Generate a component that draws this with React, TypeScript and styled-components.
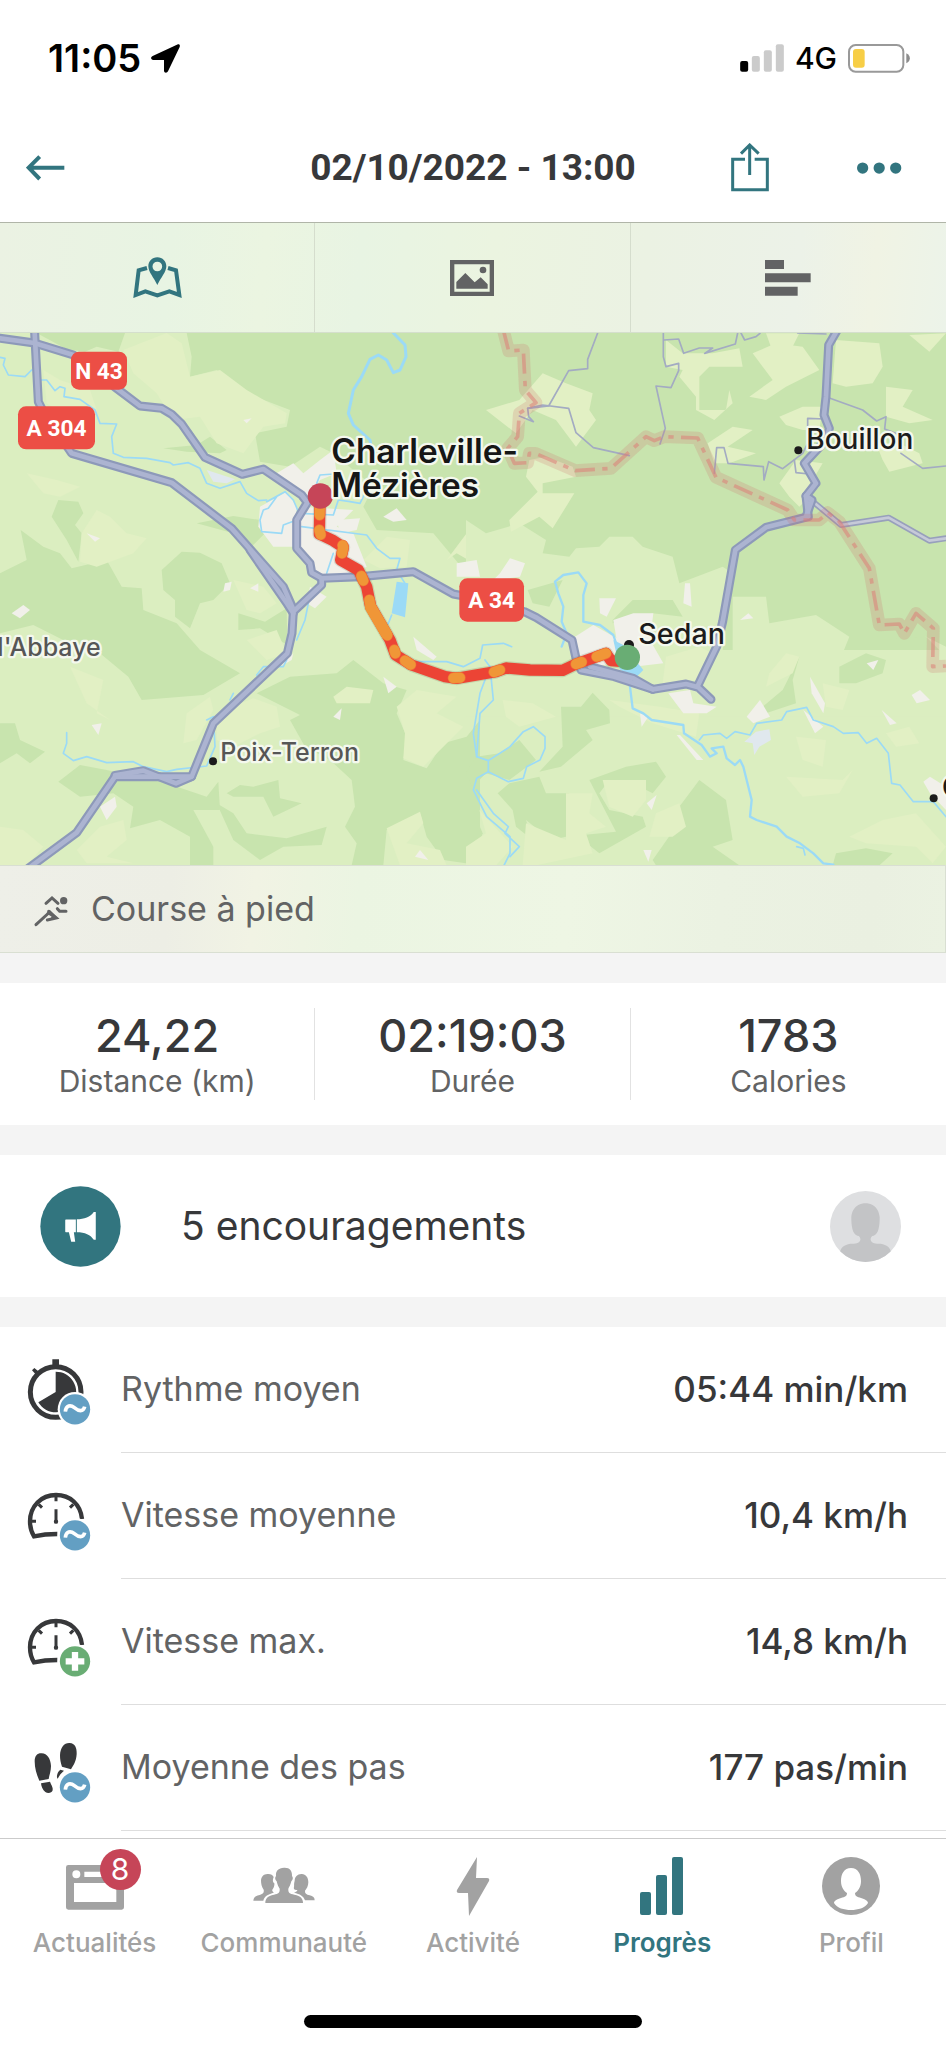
import React from "react";
import styled, { createGlobalStyle } from "styled-components";

const teal = "#32757f";
const ink = "#37383a";
const slate = "#626364";
const mute = "#a2a2a2";
const sans = `Inter, "Liberation Sans", sans-serif`;

const GlobalStyle = createGlobalStyle`
  * { box-sizing: border-box; }
  body { margin: 0; background: #fff; font-family: ${sans}; color: ${ink}; }
  button { font: inherit; color: inherit; border: 0; padding: 0; margin: 0; background: none; cursor: pointer; }
  a { color: inherit; text-decoration: none; }
  svg { display: block; flex: none; }
`;

const Page = styled.div`
  display: flex;
  flex-direction: column;
  min-height: 100vh;
`;

const StatusBar = styled.div`
  display: flex;
  align-items: center;
  justify-content: space-between;
  height: 116px;
  padding: 0 36px 0 48px;
  color: #000;
`;

const StatusGroup = styled.div<{ $gap: number }>`
  display: flex;
  align-items: center;
  gap: ${(p) => p.$gap}px;
`;

const Clock = styled.span`
  font-size: 38px;
  line-height: 44px;
  font-weight: 600;
`;

const Network = styled.span`
  font-size: 30px;
  line-height: 36px;
  font-weight: 500;
`;

const Header = styled.header`
  display: grid;
  grid-template-columns: 1fr auto 1fr;
  align-items: center;
  height: 107px;
  padding: 0 44px 2px 26px;
  border-bottom: 1px solid #b0b5a8;
`;

const Title = styled.h1`
  margin: 0;
  font-family: Roboto, ${sans};
  font-size: 37px;
  line-height: 44px;
  font-weight: 700;
  padding-left: 18px;
`;

const HeaderActions = styled.div`
  display: flex;
  align-items: center;
  justify-content: flex-end;
  gap: 88px;
`;

const Tabs = styled.div`
  display: grid;
  grid-template-columns: repeat(3, 1fr);
  height: 110px;
  border-bottom: 1px solid #d5dfcd;
  background: linear-gradient(95deg, #ebf2e3 0%, #e8f4e3 18%, #ebf5e1 28%, #e8f4e3 38%, #ebf4e0 52%, #ebf2e3 68%, #ecf2e8 84%, #f0f3e4 92%, #ecf3e9 100%);
`;

const Tab = styled.button<{ $active?: boolean }>`
  display: flex;
  align-items: center;
  justify-content: center;
  color: ${(p) => (p.$active ? teal : slate)};
  &:not(:last-child) { border-right: 1px solid #d5ddcd; }
`;

const MapDrawing = styled.svg`
  width: 100%;
  height: auto;
`;

const SportRow = styled.div`
  display: flex;
  align-items: center;
  gap: 23px;
  height: 88px;
  padding-left: 34px;
  border: 1px solid #d9dfd2;
  border-left: 0;
  background: linear-gradient(95deg, #eeefe8 0%, #edeee5 18%, #f1f3e4 27%, #ebf5e2 38%, #eef6e4 60%, #ebf2e2 76%, #eaf0e1 92%, #ebf2e2 100%);
  font-size: 34px;
  line-height: 42px;
  color: ${slate};
`;

const Sections = styled.main`
  display: flex;
  flex-direction: column;
  gap: 30px;
  padding-top: 30px;
  flex: 1;
  background: #f4f4f4;
`;

const Totals = styled.dl`
  display: grid;
  grid-template-columns: repeat(3, 1fr);
  margin: 0;
  padding: 25px 0;
  height: 142px;
  background: #fff;
`;

const Total = styled.div`
  display: flex;
  flex-direction: column-reverse;
  justify-content: center;
  align-items: center;
  &:not(:last-child) { border-right: 1px solid #e2e2e2; }
`;

const TotalLabel = styled.dt`
  font-size: 30px;
  line-height: 36px;
  color: ${slate};
`;

const TotalValue = styled.dd`
  margin: 0;
  font-size: 45px;
  line-height: 54px;
  font-weight: 500;
`;

const Cheers = styled.button`
  display: flex;
  align-items: center;
  height: 142px;
  padding: 0 45px 0 40px;
  background: #fff;
  text-align: left;
`;

const CheersText = styled.span`
  flex: 1;
  padding-left: 60px;
  font-size: 39px;
  line-height: 48px;
`;

const Metrics = styled.dl`
  margin: 0;
  flex: 1;
  background: #fff;
`;

const Metric = styled.div`
  display: flex;
  padding-left: 26px;
  height: 126px;
`;

const MetricBody = styled.div`
  display: flex;
  flex: 1;
  align-items: center;
  justify-content: space-between;
  margin-left: 29px;
  padding: 0 38px 2px 0;
  border-bottom: 1px solid #dedede;
`;

const MetricIcon = styled.svg`
  width: 66px;
  height: 70px;
  margin-top: 30px;
`;

const MetricLabel = styled.dt`
  font-size: 34px;
  line-height: 42px;
  color: ${slate};
`;

const MetricValue = styled.dd`
  margin: 0;
  font-size: 35px;
  line-height: 42px;
  font-weight: 500;
`;

const TabBar = styled.nav`
  display: flex;
  flex-direction: column;
  height: 210px;
  border-top: 1px solid #cbcbcb;
  background: #fff;
`;

const TabBarItems = styled.div`
  display: grid;
  grid-template-columns: repeat(5, 1fr);
  flex: 1;
  padding-top: 17px;
`;

const TabBarItem = styled.a<{ $active?: boolean }>`
  display: flex;
  flex-direction: column;
  align-items: center;
  gap: 11px;
  font-size: 26px;
  line-height: 32px;
  font-weight: ${(p) => (p.$active ? 600 : 500)};
  color: ${(p) => (p.$active ? teal : mute)};
`;

const IconSlot = styled.span`
  position: relative;
  display: block;
`;

const Badge = styled.span`
  position: absolute;
  top: -7px;
  right: -16px;
  width: 41px;
  height: 41px;
  border-radius: 50%;
  background: #c64558;
  color: #fff;
  font-size: 30px;
  line-height: 41px;
  font-weight: 400;
  text-align: center;
`;

const HomeIndicator = styled.div`
  align-self: center;
  width: 338px;
  height: 13px;
  margin-bottom: 20px;
  border-radius: 7px;
  background: #000;
`;

/* ---------- map ---------- */

const FOREST = "#c8e4ae";
const MEADOW = "#e2f0c4";
const TOWN = "#f1f0ea";
const WATER = "#9bdaf6";

const shapes = (list: string[], fill: string) =>
  list.map((points, i) => <polygon key={i} points={points} fill={fill} />);

const nwForest = [
  "560,39 1440,39 1440,980 1400,760 1300,640 1130,630 1090,560 1120,500 1000,400 960,380 870,440 780,425 765,340 860,320 870,270 740,220 650,150 570,170 575,110",
  "110,39 375,39 355,95 290,80 255,95 200,88",
  "0,760 80,720 62,630 130,680 180,700 215,745 320,720 365,800 425,805 430,870 530,910 600,990 720,1060 610,1125 425,1140 385,1070 300,1000 200,965 100,915 0,940",
  "485,750 545,695 600,698 665,730 690,790 640,840 600,850 570,925 525,890 525,840 490,810",
  "155,590 175,540 235,545 250,580 225,615 245,640 235,725 200,660",
  "590,610 700,588 800,603 795,640 745,690 700,640",
  "715,880 795,905 860,865 862,975 780,925 715,930",
  "490,385 590,375 630,350 680,390 660,400 560,395",
];
const nwField = [
  "1060,790 1160,760 1340,790 1290,820 1225,870 1240,905 1300,912 1440,860 1440,1040 1180,1020 1090,860",
];
const nwMeadow = [
  "370,90 500,39 545,70 570,170 660,150 740,210 860,280 855,310 790,320 730,400 650,370 600,290 520,300 470,220 400,160",
  "130,150 180,180 270,210 290,270 270,330 210,300 140,250",
  "80,460 170,480 240,500 180,530 130,520",
  "245,640 290,570 330,590 380,640 440,655 400,700 290,740 240,725",
  "700,780 790,800 830,850 780,880 740,870",
  "1090,720 1160,650 1230,660 1220,740 1140,745",
  "1340,720 1400,640 1440,600 1440,740 1370,700",
  "740,960 830,930 860,1000 800,1020",
  "210,1040 310,1080 290,1180 330,1200 260,1150",
];
const neMeadow = [
  "60,270 160,240 230,160 300,190 380,220 370,270 390,300 330,380 270,300 200,270 150,340",
  "190,420 240,410 320,440 330,470 230,490 230,520 325,520 260,625 220,590 135,635 130,600 215,515 180,470",
  "600,60 650,100 740,100 820,85 830,140 730,140 700,170 700,270 780,270 790,210 800,250 745,300 690,270 690,230 640,170 650,150 600,140",
  "860,100 930,70 1010,80 1060,150 960,200 900,240 850,230 920,180",
  "1110,60 1240,70 1250,140 1220,190 1140,200 1100,190",
  "1260,200 1340,210 1310,260 1400,300 1330,310 1260,290",
  "940,290 1010,260 1070,260 1060,330 1010,330 960,315",
  "725,370 800,320 860,330 785,380 870,400 790,430 745,430",
  "940,490 990,420 1070,430 1040,480 1060,500 1000,560 970,530",
  "1230,370 1300,370 1360,400 1370,430 1270,455 1250,420",
  "900,40 1000,40 970,100 920,95",
  "1330,45 1440,40 1390,95",
];
const neField = [
  "0,600 60,640 160,610 240,660 230,700 310,710 330,685 400,680 430,650 500,650 530,680 620,710 640,790 770,740 800,760 770,990 0,990",
  "800,830 900,830 910,910 1050,885 1150,950 1130,1000 1210,1070 1440,1030 1440,990 800,990",
  "1290,910 1380,860 1440,880 1440,1010 1380,950",
];
const swForest = [
  "770,340 870,290 1010,280 1060,240 1150,310 1220,330 1190,400 1220,470 1210,540 1280,565 1330,490 1400,470 1440,420 1440,856 1330,840 1280,770 1260,700 1160,750 1150,856 1055,856 1070,790 1035,740 1065,680 1055,600 990,540 915,500 870,420 900,405",
  "175,605 240,555 320,570 500,610 620,650 655,605 660,690 580,690 640,800 640,856 570,856 570,770 480,720 390,745 400,680 340,640 240,650",
  "650,670 700,700 740,760 860,775 980,740 965,795 850,800 780,840 700,780",
  "0,430 45,430 60,480 135,515 90,550 50,520 0,550",
  "680,640 720,615 760,620 835,600 840,655 905,670 820,710 790,650 700,650",
];
const swMeadow = [
  "650,400 760,355 830,380 840,440 780,460 700,500 650,480",
  "1190,380 1250,330 1370,350 1310,400 1390,440 1330,500 1270,560 1210,535 1215,460",
  "1160,745 1260,695 1270,730 1220,790 1320,810 1340,856 1200,856",
  "230,810 300,740 370,720 380,780 320,830 400,850 260,850",
  "0,740 70,750 130,800 80,856 0,856",
  "1000,350 1040,320 1120,330 1110,370 1010,370",
  "560,400 630,350 640,390 590,480 550,490",
];
const seForest = [
  "285,380 345,380 380,338 430,390 432,430 360,450 380,480 285,560 220,575 290,500",
  "95,640 130,610 220,590 240,640 310,640 300,770 255,780 180,720 200,780 150,740 140,690",
  "0,580 30,530 100,520 160,480 210,540 130,600 60,580 20,620",
  "370,600 480,560 570,545 600,590 560,640 500,610 430,600 400,640 430,690 530,710 540,740 400,820 350,780 350,765 450,755",
  "560,840 630,740 640,680 700,600 780,660 800,780 740,800 820,856 570,856",
  "0,640 50,760 30,820 0,790",
  "890,380 950,330 1000,230 980,300 990,370 900,400",
  "1120,260 1200,220 1260,240 1250,280 1170,310 1120,310",
  "1110,820 1200,805 1280,820 1240,856 1100,856",
  "440,120 500,60 620,60 650,110 560,100 440,130",
  "185,30 290,0 250,80 200,70",
];
const seMeadow = [
  "110,360 200,370 270,410 160,440 120,410",
  "430,360 580,380 700,400 690,470 560,430 460,380",
  "600,230 700,200 740,220 690,300 590,310",
  "300,640 380,640 370,700 420,740 360,760 380,820 210,856 170,856 180,730 300,780",
  "410,600 540,600 540,660 500,710 430,680",
  "550,770 570,700 640,670 660,740 620,770",
  "960,590 1130,600 1160,570 1120,640 1010,650",
  "990,470 1080,480 1070,560 1010,540",
  "1070,310 1150,330 1130,390 1080,380",
  "1150,770 1250,720 1350,700 1440,800 1400,850 1350,800 1200,790",
  "910,280 960,220 1000,230 980,280 900,320",
  "0,800 60,760 40,690 140,800 90,856 0,856",
  "1260,460 1330,440 1360,490 1290,500",
];

const towns = [
  "780,560 860,515 890,560 885,680 820,680 775,620",
  "830,460 880,430 910,460 960,420 1000,390 1010,460 960,480 930,530 870,500",
  "900,560 1060,570 1010,620 1060,640 1100,740 1040,770 960,790 930,740 895,690",
  "1010,600 1080,595 1070,630 1020,640",
  "1150,590 1190,565 1220,600 1180,605",
  "1370,730 1430,720 1440,770 1370,770",
  "930,800 980,830 945,865 920,850",
  "35,880 70,855 90,870 60,895",
  "675,790 695,785 690,810 670,815",
  "750,805 775,790 775,815",
  "260,640 300,655 285,665",
  "730,300 755,295 740,310",
  "1240,950 1310,1010 1300,1020 1250,990",
  "1150,1070 1190,1100 1165,1120",
  "1000,1190 1025,1165 1020,1200",
  "275,1215 305,1210 295,1245",
  "300,1460 345,1430 350,1460 320,1500",
  "1245,1610 1260,1590 1285,1620",
  "840,1040 880,1000 875,1020",
  "1710,960 1780,915 1860,960 1850,1030 1740,1045",
  "1840,900 1900,880 1960,880 1950,960 1990,1030 1900,1040 1850,960",
  "1798,835 1848,835 1820,890 1800,880",
  "2055,790 2070,790 2075,860 2050,850",
  "2005,1120 2070,1110 2080,1150 2150,1160 2120,1180 2050,1180",
  "2240,1190 2280,1140 2310,1190 2260,1210",
  "2430,1070 2475,1150 2470,1180 2435,1120",
  "2410,1170 2470,1220 2445,1240",
  "2030,1245 2040,1245 2110,1320 2090,1320",
  "1920,1180 1945,1190 1925,1220",
  "2600,1030 2635,1020 2620,1050",
  "2735,1125 2760,1110 2790,1140 2750,1150",
  "2770,1385 2790,1370 2838,1400 2838,1470 2790,1420",
  "1500,760 1530,715 1575,730 1560,770 1480,780",
  "1930,1590 1955,1590 1945,1625",
  "1940,1450 1970,1425 1955,1470",
  "2645,1170 2690,1210 2670,1215",
  "2220,900 2245,880 2260,895",
];

const rivers = [
  "0,112 15,115 10,135 25,165 75,170 95,150",
  "125,180 140,180 165,212 180,200 195,205 192,230 240,238 285,270 300,310 350,312 335,350 340,400 370,412 440,415 510,428 520,435 565,428 600,445 620,490 660,505 720,485 740,520 775,542 800,540",
  "800,545 855,515 880,540 893,570 890,600 850,615 845,640 785,635 780,600 790,570 805,565 830,530",
  "905,620 1100,645 1130,685 1170,715 1200,715 1190,750 1215,790",
  "950,490 960,465 1000,462",
  "900,580 1000,585 1015,540 1050,545 1080,550 1100,510",
  "1175,885 1165,910 1150,930",
  "925,850 915,900 890,960",
  "1000,700 980,760",
  "860,1020 850,1040 790,1040 770,1065 M700,1120 690,1140",
  "200,1238 200,1270 190,1300 220,1322 260,1310 320,1328 400,1325 430,1340 500,1355 530,1348 620,1338 645,1280 640,1190 620,1200",
  "1250,1025 1340,1025 1390,1040 1440,1015 1448,975 1510,970 1535,980",
  "1455,1020 1470,1040 1440,1120 1420,1240 1430,1310 1465,1322 1465,1355 1430,1375 1420,1410 1460,1490 1530,1550 1530,1600 1510,1640",
  "1465,1322 1530,1280 1570,1235 1600,1220 1635,1250 1635,1285 1620,1320 1580,1340 1570,1375 1525,1385 1465,1355",
  "1470,1040 1480,1140 1440,1180 1430,1310",
  "1430,1410 1480,1480 1525,1520 1515,1540 1558,1580 1530,1610",
  "2098,1260 2110,1245 2160,1240 2180,1255 2205,1235 2250,1245 2270,1210 2345,1200 2360,1175 2420,1162 2440,1200 2500,1220 2530,1240 2575,1238 2600,1270 2630,1255 2665,1300 2675,1390 2700,1395 2740,1445 2800,1445 2838,1490",
  "2390,1580 2410,1585 2415,1605",
];
const wideRivers = [
  "1685,980 1700,940 1685,905 1690,860 1675,820 1665,785 1690,765 1735,757 1760,790 1750,825 1750,905 1800,915 1840,945 1850,975",
  "1885,1060 1898,1165 1930,1180 1955,1200 2050,1215 2052,1240 2105,1275 2130,1310 2150,1300 2135,1285 2170,1280 2180,1315 2205,1335 2220,1320 2230,1340 2240,1380 2255,1440 2250,1490 2270,1500 2330,1520 2360,1550 2400,1570 2440,1600 2470,1630 2500,1634",
];
const meuse = [
  "1180,39 1215,75 1218,110 1200,150 1180,158 1160,120 1135,105 1110,118 1085,170 1060,210 1045,280 1060,315 1110,360 1120,420",
];

const thinRoads = [
  "395,39 365,118 365,146 308,152 248,258 185,265 188,290 202,305 160,288",
  "185,265 230,255 308,265 330,338 382,383 490,407",
  "592,39 592,110 600,140 638,130 638,152 615,203 570,198 598,325 582,372",
  "594,60 638,57 653,100 700,84 740,84 716,100 808,72 815,39",
  "825,39 836,60 870,50 882,40 M995,39 1080,42",
  "1088,233 1190,270 1232,303 1260,290 1256,327 1295,342 M1305,400 1370,445 1440,438",
  "745,460 752,383 774,383 786,430 892,440 894,480 908,425 950,446 1010,400 1025,370 1025,295 1075,297",
  "985,420 990,458 1030,462",
];

const mainRoads = [
  "0,55 103,69 220,105 350,205 420,258 485,265 515,283 545,312 615,412 727,463 790,447 905,525 922,548 890,600 890,685 930,730 935,758 965,775 1080,770 1240,755 1360,822 1480,845 1573,875 1608,892 1716,960 1728,1015 1743,1050 1843,1070 1958,1108 2058,1092 2095,1102 2133,1138",
  "103,20 115,245 130,275 215,400 515,488 695,625 850,800 880,868",
  "750,690 862,852 880,880",
  "965,775 965,795 880,875 876,940 862,1000 640,1210 575,1370 345,1370 230,1538 70,1656",
  "345,1366 430,1352 528,1390 575,1370",
  "2515,25 2486,75 2478,230 2472,285 2488,325 2480,358 2413,430 2448,490 2418,528 2425,590 2298,622 2206,690 2168,905 2150,980 2092,1100",
  "1770,1040 1900,1075 1958,1108",
  "2418,528 2436,540 2418,590",
];

const border =
  "112,30 128,93 172,90 178,210 210,248 160,280 155,350 125,385 145,430 185,428 190,400 208,400 328,452 435,445 540,350 565,362 595,350 695,354 750,472 965,570 985,600 1060,600 1085,578 1120,605 1210,745 1240,915 1300,912 1315,940 1350,880 1402,925 1400,1040 1440,1038";

const track =
  "960,530 958,642 1000,662 1030,682 1022,720 1075,750 1100,800 1112,860 1170,960 1187,1005 1235,1035 1335,1070 1370,1075 1440,1063 1488,1055 1518,1044 1590,1050 1688,1051 1728,1032 1818,1000 1833,1022 1870,1025";
const slowParts = [
  "960,540 959,585",
  "958,630 962,644",
  "1028,676 1030,682 1026,700",
  "1084,768 1090,782",
  "1108,840 1112,860 1162,946",
  "1183,990 1186,1000",
  "1215,1022 1232,1034",
  "1360,1074 1380,1073",
  "1482,1056 1500,1050",
  "1728,1032 1745,1026",
  "1790,1010 1818,1000",
];

const lines = (list: string[], stroke: string, width: number) =>
  list.map((pts, i) => (
    <path key={i} d={"M" + pts} stroke={stroke} strokeWidth={width} fill="none" strokeLinejoin="round" strokeLinecap="round" />
  ));

const PlaceName = styled.text<{ $size: number; $weight: number; $color: string }>`
  font-family: ${sans};
  font-size: ${(p) => p.$size}px;
  font-weight: ${(p) => p.$weight};
  fill: ${(p) => p.$color};
  stroke: #f4f8ee;
  stroke-width: 14px;
  stroke-linejoin: round;
  paint-order: stroke;
`;

const ShieldText = styled.text`
  font-family: Roboto, sans-serif;
  font-size: 68px;
  font-weight: 700;
  fill: #fff;
  text-anchor: middle;
`;

const Shield = ({ x, y, w, h, name }: { x: number; y: number; w: number; h: number; name: string }) => (
  <g>
    <rect x={x} y={y} width={w} height={h} rx="24" fill="#ec4e45" />
    <ShieldText x={x + w / 2} y={y + h / 2 + 24}>{name}</ShieldText>
  </g>
);

const RouteMap = () => (
  <MapDrawing viewBox="0 39 2838 1597" role="img" aria-label="Parcours de Sedan à Charleville-Mézières">
    <rect x="0" y="39" width="2838" height="1597" fill="#dbeec0" />
    {shapes(nwForest, FOREST)}
    {shapes(nwField, "#dbeec0")}
    {shapes(nwMeadow, MEADOW)}
    <g transform="translate(1398 0)">
      <rect x="0" y="39" width="1440" height="1030" fill={FOREST} />
      <rect x="0" y="990" width="1440" height="200" fill="#dbeec0" />
      {shapes(neField, "#dbeec0")}
      {shapes(neMeadow, MEADOW)}
    </g>
    <g transform="translate(0 780)">
      {shapes(swForest, FOREST)}
      {shapes(swMeadow, MEADOW)}
    </g>
    <g transform="translate(1398 780)">
      {shapes(seForest, FOREST)}
      {shapes(seMeadow, MEADOW)}
      <polygon points="1200,0 1440,0 1440,200 1380,170 1250,180 1200,150" fill={FOREST} />
      <polygon points="835,485 870,455 910,448 915,480 880,500 865,525 860,490" fill="#e0e8ee" />
    </g>
    {shapes(towns, TOWN)}
    <polygon points="620,450 705,478 680,490 640,485" fill="#e0e8ee" />
    <polygon points="1190,785 1225,790 1215,892 1175,880" fill={WATER} />
    <polygon points="1840,960 1870,975 1930,1050 1910,1070 1860,1050" fill={WATER} />
    {lines(rivers, WATER, 5)}
    {lines(wideRivers, WATER, 7)}
    {lines(meuse, WATER, 9)}
    <g transform="translate(1398 0)">
      {lines(thinRoads, "#a3abc2", 5)}
      {lines(["1035,540 1125,615 1268,593 1390,662 1440,655"], "#98a0bc", 18)}
      {lines(["1035,540 1125,615 1268,593 1390,662 1440,655"], "#c6cad8", 8)}
    </g>
    {lines(mainRoads, "#8d99b9", 27)}
    {lines(mainRoads, "#acb4d1", 14)}
    <g transform="translate(1398 0)" fill="none" strokeLinejoin="round">
      <path d={"M" + border} stroke="#cf6a6a" strokeOpacity="0.2" strokeWidth="38" />
      <path d={"M" + border} stroke="#dc7f78" strokeOpacity="0.55" strokeWidth="11" strokeDasharray="60 22 16 22" />
    </g>
    {lines([track], "#6c6a4a33", 41)}
    {lines([track], "#ec4435", 34)}
    {lines(slowParts, "#f06f36", 34)}
    {lines(slowParts, "#f09637", 30)}
    {lines(["1112,862 1158,940"], "#f09637", 34)}
    <circle cx="1887" cy="975" r="15" fill="#1b1b1b" />
    <circle cx="961" cy="528" r="38" fill="#c64558" />
    <circle cx="1882" cy="1012" r="38" fill="#69ad74" />
    <circle cx="2395" cy="391" r="12" fill="#1b1b1b" />
    <circle cx="639" cy="1324" r="12" fill="#1b1b1b" />
    <circle cx="2801" cy="1435" r="12" fill="#1b1b1b" />
    <PlaceName $size={100} $weight={600} $color="#161616">
      <tspan x="994" y="428">Charleville-</tspan>
      <tspan x="994" y="530">Mézières</tspan>
    </PlaceName>
    <PlaceName x="2419" y="388" $size={84} $weight={500} $color="#1c1c1c">Bouillon</PlaceName>
    <PlaceName x="1915" y="972" $size={86} $weight={500} $color="#1c1c1c">Sedan</PlaceName>
    <PlaceName x="661" y="1323" $size={75} $weight={500} $color="#565656">Poix-Terron</PlaceName>
    <PlaceName x="-8" y="1008" $size={75} $weight={500} $color="#565656">l'Abbaye</PlaceName>
    <PlaceName x="2826" y="1430" $size={84} $weight={600} $color="#1c1c1c">C</PlaceName>
    <Shield x={213} y={95} w={168} h={114} name="N 43" />
    <Shield x={54} y={259} w={231} h={129} name="A 304" />
    <Shield x={1378} y={775} w={194} h={130} name="A 34" />
  </MapDrawing>
);

/* ---------- icons ---------- */

const AverageMark = () => (
  <g>
    <circle cx="225" cy="268" r="52" fill="#fff" />
    <circle cx="225" cy="268" r="45.5" fill="#639fc3" />
    <path d="M196 275 C198 255 212 254 223 263 C236 274 250 277 254 260" fill="none" stroke="#fff" strokeWidth="11" />
  </g>
);

const MaximumMark = () => (
  <g>
    <circle cx="225" cy="268" r="52" fill="#fff" />
    <circle cx="225" cy="268" r="45.5" fill="#69ad74" />
    <path d="M225 240V296M197 268H253" stroke="#fff" strokeWidth="19" />
  </g>
);

const Stopwatch = () => (
  <g>
    <circle cx="167" cy="216" r="76" fill="none" stroke={ink} strokeWidth="15" />
    <path d="M157 118h20v20h-20zM96 151l7-7 14 11-9 9z" fill={ink} />
    <path d="M167 216V155A61 61 0 1 1 115 247Z" fill={ink} />
  </g>
);

const Gauge = () => (
  <g stroke={ink} fill="none">
    <path d="M246 219C242 175 210 147 168 147C124 147 90 180 90 226C90 244 94 258 102 271C125 266 150 264 172 264" strokeWidth="13" />
    <path d="M168 150v16M116 175l10 10M220 175l-10 10M92 226h16M168 190v38" strokeWidth="9" />
    <circle cx="168" cy="227" r="6.500" fill={ink} stroke="none" />
  </g>
);

const Footsteps = () => (
  <g fill={ink}>
    <path d="M104 190C104 172 113 165 125 166C142 167 152 182 153 204C153 219 148 231 146 243L118 248C110 230 104 212 104 190Z" />
    <path d="M123 256L150 251C153 260 160 268 158 277C155 286 143 287 136 282C128 276 124 266 123 256Z" />
    <path d="M180 172C181 148 193 134 209 135C225 136 231 150 230 168C229 190 220 202 213 214L186 206C182 194 180 184 180 172Z" />
    <path d="M181 215L192 218C184 224 178 232 173 242C168 236 172 222 181 215Z" />
  </g>
);

const metrics = [
  { label: "Rythme moyen", value: "05:44 min/km", icon: <><Stopwatch /><AverageMark /></> },
  { label: "Vitesse moyenne", value: "10,4 km/h", icon: <><Gauge /><AverageMark /></> },
  { label: "Vitesse max.", value: "14,8 km/h", icon: <><Gauge /><MaximumMark /></> },
  { label: "Moyenne des pas", value: "177 pas/min", icon: <><Footsteps /><AverageMark /></> },
];

const totals = [
  { label: "Distance (km)", value: "24,22" },
  { label: "Durée", value: "02:19:03" },
  { label: "Calories", value: "1783" },
];

export default function App() {
  return (
    <Page>
      <GlobalStyle />
      <StatusBar>
        <StatusGroup $gap={10}>
          <Clock>11:05</Clock>
          <svg width="29" height="29" viewBox="402 72 87 87">
            <path d="M483 73C487 72 490 75 488 81L453 154C450 160 441 159 441 152V120H409C401 120 400 111 407 108Z" />
          </svg>
        </StatusGroup>
        <StatusGroup $gap={11}>
          <svg width="44" height="28" viewBox="784 72 131 84">
            <rect x="784" y="123" width="24" height="32" rx="6" />
            <rect x="819" y="108" width="24" height="47" rx="6" fill="#cbcbcb" />
            <rect x="855" y="91" width="24" height="64" rx="6" fill="#cbcbcb" />
            <rect x="891" y="73" width="24" height="82" rx="6" fill="#cbcbcb" />
          </svg>
          <Network>4G</Network>
          <svg width="62" height="29" viewBox="1104 71 186 87">
            <rect x="1107" y="74" width="163" height="80" rx="20" fill="none" stroke="#999" strokeWidth="6" />
            <rect x="1119" y="86" width="35" height="56" rx="9" fill="#f7ce46" />
            <path d="M1279 99C1293 105 1293 123 1279 129Z" fill="#8c8c8c" />
          </svg>
        </StatusGroup>
      </StatusBar>

      <Header>
        <button aria-label="Retour">
          <svg width="40" height="26" viewBox="19 404 120 78" fill="none" stroke={teal} strokeWidth="12">
            <path d="M134 442H26M60 409L27 442L60 476" />
          </svg>
        </button>
        <Title>02/10/2022 - 13:00</Title>
        <HeaderActions>
          <button aria-label="Partager">
            <svg width="38" height="50" viewBox="755 363 114 150" fill="none" stroke={teal} strokeWidth="9">
              <path d="M797 412H760V503H864V412H826M811 459V368M785 395L811 369L838 395" />
            </svg>
          </button>
          <button aria-label="Plus d'options">
            <svg width="45" height="12" viewBox="1130 420 136 36" fill={teal}>
              <circle cx="1147" cy="438" r="17" />
              <circle cx="1197" cy="438" r="17" />
              <circle cx="1247" cy="438" r="17" />
            </svg>
          </button>
        </HeaderActions>
      </Header>

      <Tabs>
        <Tab $active aria-label="Carte">
          <svg width="49" height="41" viewBox="340 709 147 123">
            <path d="M382 742L357 749L348 823L377 812L413 824L449 812L479 823L469 749L445 742" fill="none" stroke="currentColor" strokeWidth="12" />
            <path fillRule="evenodd" fill="currentColor" d="M413 710C429 710 440 722 440 737C440 754 424 770 413 793C402 770 386 754 386 737C386 722 397 710 413 710ZM413 723A14 14 0 1 0 413 752A14 14 0 1 0 413 723Z" />
          </svg>
        </Tab>
        <Tab aria-label="Photos">
          <svg width="44" height="36" viewBox="0 0 132 108" fill="currentColor">
            <path fillRule="evenodd" d="M0 0H132V108H0ZM13 13V95H119V13Z" />
            <path d="M19 86V66L46 39L74 67L92 52L113 73V86Z" />
            <circle cx="99" cy="30" r="10" />
          </svg>
        </Tab>
        <Tab aria-label="Graphiques">
          <svg width="46" height="36" viewBox="0 0 138 108" fill="currentColor">
            <path d="M0 0H57V27H0ZM0 40H137V67H0ZM0 80H98V107H0Z" />
          </svg>
        </Tab>
      </Tabs>

      <RouteMap />

      <SportRow>
        <svg width="34" height="30" viewBox="103 946 102 90" overflow="visible" fill="none" stroke={slate} strokeWidth="9" strokeLinecap="round">
          <circle cx="192" cy="966" r="11" fill={slate} stroke="none" />
          <path d="M139 974L157 958L175 974M173 990L180 998H199M109 1038L147 1003M147 998L170 1018L143 1024" />
          <path d="M140 1004L150 993L174 1018L150 1024L156 1014Z" fill={slate} stroke="none" />
        </svg>
        <span>Course à pied</span>
      </SportRow>

      <Sections>
        <Totals>
          {totals.map((t) => (
            <Total key={t.label}>
              <TotalLabel>{t.label}</TotalLabel>
              <TotalValue>{t.value}</TotalValue>
            </Total>
          ))}
        </Totals>

        <Cheers>
          <svg width="81" height="81" viewBox="60 44 244 244">
            <circle cx="182" cy="166" r="121" fill={teal} />
            <path d="M138 145H168V183H162L166 212H154L147 183H138Q136 183 136 181V147Q136 145 138 145Z" fill="#fff" />
            <path d="M171 144C193 144 212 137 222 122H228V206H222C213 191 195 183 171 183Z" fill="#fff" />
          </svg>
          <CheersText>5 encouragements</CheersText>
          <svg width="71" height="71" viewBox="0 0 70 70">
            <clipPath id="avatar"><circle cx="35" cy="35" r="35" /></clipPath>
            <circle cx="35" cy="35" r="35" fill="#dedfe1" />
            <path
              clipPath="url(#avatar)"
              fill="#c3c4c6"
              d="M35 12C39 12 48 14 49 26C49 34 48 43 43 44C41 44 40 46 40 48C41 52 45 52 50 52C56 53 60 56 60 61V72H10V61C10 56 14 53 20 52C25 52 29 52 30 48C30 46 29 44 27 44C22 43 21 34 21 26C22 14 31 12 35 12Z"
            />
          </svg>
        </Cheers>

        <Metrics>
          {metrics.map((m) => (
            <Metric key={m.label}>
              <MetricIcon viewBox="78 111 198 210">{m.icon}</MetricIcon>
              <MetricBody>
                <MetricLabel>{m.label}</MetricLabel>
                <MetricValue>{m.value}</MetricValue>
              </MetricBody>
            </Metric>
          ))}
        </Metrics>
      </Sections>

      <TabBar>
        <TabBarItems>
          <TabBarItem href="#actualites">
            <IconSlot>
              <svg width="60" height="60" viewBox="194 48 180 180" fill="currentColor">
                <path fillRule="evenodd" d="M204 75H364Q371 75 371 82V202Q371 209 364 209H204Q197 209 197 202V82Q197 75 204 75ZM221 129V186H348V129ZM228 91A12 12 0 1 0 228 115A12 12 0 1 0 228 91ZM252 95V111H348V95Z" />
              </svg>
              <Badge>8</Badge>
            </IconSlot>
            Actualités
          </TabBarItem>
          <TabBarItem href="#communaute">
            <svg width="60" height="60" viewBox="759 48 180 180" overflow="visible" fill="currentColor">
              <path d="M849 83C866 82 874 92 873 108C877 112 876 120 871 124C869 134 864 142 862 146C861 158 866 161 880 164C900 168 906 176 906 189H793C793 176 799 168 819 164C832 161 837 158 836 146C833 142 829 134 827 124C822 120 821 112 825 108C824 92 832 84 849 83Z" />
              <path d="M799 102C809 101 815 105 818 111C815 118 814 126 820 130C821 138 818 145 814 149C813 153 815 156 819 158C802 162 790 168 787 182H757C758 171 763 168 776 165C785 162 790 160 788 149C782 142 780 130 780 121C781 109 788 103 799 102Z" />
              <path d="M901 102C914 101 922 112 922 127C922 138 917 147 912 152C911 160 916 163 926 166C936 169 941 172 941 181H912C908 168 897 162 879 158C884 156 889 154 889 150C879 151 877 146 879 141C880 136 878 132 881 122C881 110 889 103 901 102Z" />
            </svg>
            Communauté
          </TabBarItem>
          <TabBarItem href="#activite">
            <svg width="60" height="60" viewBox="0 0 60 60" fill="currentColor">
              <path d="M34 1L33 22H44Q47 22 46 25L26 60L25 37H16Q13 37 14 34Z" />
            </svg>
            Activité
          </TabBarItem>
          <TabBarItem href="#progres" $active aria-current="page">
            <svg width="60" height="60" viewBox="0 0 60 60" fill="currentColor">
              <rect x="8" y="36" width="11" height="23" rx="2" />
              <rect x="24" y="19" width="11" height="40" rx="2" />
              <rect x="40" y="1" width="11" height="58" rx="2" />
            </svg>
            Progrès
          </TabBarItem>
          <TabBarItem href="#profil">
            <svg width="60" height="60" viewBox="0 0 60 60">
              <circle cx="30" cy="30" r="29" fill={mute} />
              <path d="M30 12C37 12 40 18 40 25C40 31 37 35 34 37C34 40 36 41 40 42C44 43 47 45 47 47C44 52 37 54 30 54C23 54 16 52 13 47C13 45 16 43 20 42C24 41 26 40 26 37C23 35 20 31 20 25C20 18 23 12 30 12Z" fill="#fff" />
            </svg>
            Profil
          </TabBarItem>
        </TabBarItems>
        <HomeIndicator />
      </TabBar>
    </Page>
  );
}
